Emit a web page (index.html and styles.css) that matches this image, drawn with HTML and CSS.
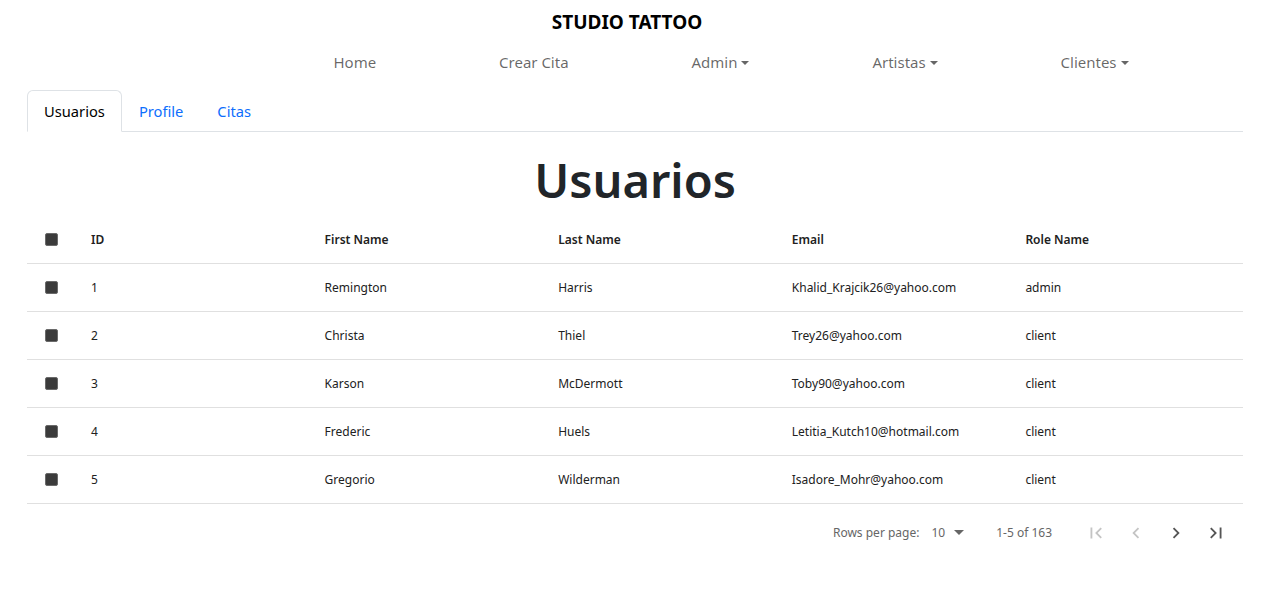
FILE: index.html
```html
<!DOCTYPE html>
<html lang="es">
<head>
<meta charset="utf-8">
<title>Studio Tattoo</title>
<link rel="stylesheet" href="styles.css">
</head>
<body>
<header class="navbar">
  <div class="brand">STUDIO TATTOO</div>
  <ul class="nav">
    <li><a class="nav-link">Home</a></li>
    <li><a class="nav-link">Crear Cita</a></li>
    <li><a class="nav-link dropdown">Admin</a></li>
    <li><a class="nav-link dropdown">Artistas</a></li>
    <li><a class="nav-link dropdown">Clientes</a></li>
  </ul>
</header>
<main class="container">
  <div class="tabs">
    <a class="tab active">Usuarios</a>
    <a class="tab">Profile</a>
    <a class="tab">Citas</a>
  </div>
  <h1 class="title">Usuarios</h1>
  <table class="grid">
    <thead>
      <tr>
        <th class="check"><span class="box"></span></th>
        <th>ID</th>
        <th>First Name</th>
        <th>Last Name</th>
        <th>Email</th>
        <th>Role Name</th>
      </tr>
    </thead>
    <tbody>
      <tr><td class="check"><span class="box"></span></td><td>1</td><td>Remington</td><td>Harris</td><td>Khalid_Krajcik26@yahoo.com</td><td>admin</td></tr>
      <tr><td class="check"><span class="box"></span></td><td>2</td><td>Christa</td><td>Thiel</td><td>Trey26@yahoo.com</td><td>client</td></tr>
      <tr><td class="check"><span class="box"></span></td><td>3</td><td>Karson</td><td>McDermott</td><td>Toby90@yahoo.com</td><td>client</td></tr>
      <tr><td class="check"><span class="box"></span></td><td>4</td><td>Frederic</td><td>Huels</td><td>Letitia_Kutch10@hotmail.com</td><td>client</td></tr>
      <tr><td class="check"><span class="box"></span></td><td>5</td><td>Gregorio</td><td>Wilderman</td><td>Isadore_Mohr@yahoo.com</td><td>client</td></tr>
    </tbody>
  </table>
  <div class="pagination">
    <span class="rpp-label">Rows per page:</span>
    <span class="rpp-select">10 <svg class="caret" viewBox="0 0 10 5" width="10" height="5"><path d="M0 0 L10 0 L5 5 Z" fill="#666"/></svg></span>
    <span class="range">1-5 of 163</span>
    <div class="pager">
      <span class="pbtn disabled"><svg viewBox="0 0 24 24" width="22" height="22"><path d="M18.41 16.59 13.82 12l4.59-4.59L17 6l-6 6 6 6zM6 6h2v12H6z" fill="currentColor"/></svg></span>
      <span class="pbtn disabled"><svg viewBox="0 0 24 24" width="22" height="22"><path d="M15.41 7.41 14 6l-6 6 6 6 1.41-1.41L10.83 12z" fill="currentColor"/></svg></span>
      <span class="pbtn"><svg viewBox="0 0 24 24" width="22" height="22"><path d="M10 6 8.59 7.41 13.17 12l-4.58 4.59L10 18l6-6z" fill="currentColor"/></svg></span>
      <span class="pbtn"><svg viewBox="0 0 24 24" width="22" height="22"><path d="M5.59 7.41 10.18 12l-4.59 4.59L7 18l6-6-6-6zM16 6h2v12h-2z" fill="currentColor"/></svg></span>
    </div>
  </div>
</main>
</body>
</html>
```
FILE: styles.css
```css
* { box-sizing: border-box; }
body {
  margin: 0;
  font-family: "Noto Sans", "Open Sans", sans-serif;
  color: #212529;
  background: #fff;
}
.navbar {
  display: flex;
  flex-direction: column;
  padding-top: 9px;
}
.brand {
  text-align: center;
  font-size: 19px;
  font-weight: 700;
  color: #000;
  line-height: 26px;
  padding-right: 9px;
}
.nav {
  list-style: none;
  margin: 15px 0 0 272px;
  padding: 0;
  width: 918px;
  display: flex;
}
.nav li {
  flex: 1 1 auto;
  text-align: center;
}
.nav-link {
  display: block;
  padding: 0 16px;
  font-size: 15px;
  line-height: 24px;
  color: rgba(0,0,0,0.6);
}
.dropdown::after {
  content: "";
  display: inline-block;
  margin-left: 4px;
  vertical-align: 3px;
  border-top: 4px solid;
  border-left: 4px solid transparent;
  border-right: 4px solid transparent;
}
.container {
  margin: 0 20px 0 27px;
  padding-top: 16px;
}
.tabs {
  display: flex;
  border-bottom: 1px solid #dee2e6;
}
.tab {
  display: block;
  padding: 8px 16px;
  font-size: 14.7px;
  line-height: 24px;
  color: #0d6efd;
  border: 1px solid transparent;
  border-top-left-radius: 6px;
  border-top-right-radius: 6px;
  margin-bottom: -1px;
}
.tab.active {
  color: #000;
  border-color: #dee2e6 #dee2e6 #fff;
  background: #fff;
}
.title {
  margin: 18px 0 6px;
  text-align: center;
  font-size: 47px;
  font-weight: 600;
  line-height: 60px;
  color: #212529;
}
.grid {
  width: 100%;
  border-collapse: collapse;
  table-layout: fixed;
  font-size: 12px;
  color: #212121;
}
.grid th, .grid td {
  text-align: left;
  padding: 0 16px;
  border-bottom: 1px solid #e0e0e0;
  white-space: nowrap;
}
.grid th {
  height: 47px;
  font-weight: 600;
}
.grid td {
  height: 48px;
}
.grid .check {
  width: 48px;
  padding: 0 0 0 18px;
}
.box {
  display: block;
  width: 13px;
  height: 13px;
  background: #3b3b3b;
  border: 1px solid #6a6a6a;
  border-radius: 2px;
}
.pagination {
  display: flex;
  align-items: center;
  justify-content: flex-end;
  height: 58px;
  font-size: 12px;
  color: #666;
  padding-right: 16px;
}
.rpp-select {
  margin-left: 12px;
  display: inline-flex;
  align-items: center;
  gap: 9px;
}
.range {
  margin-left: 32px;
}
.pager {
  display: flex;
  margin-left: 33px;
  gap: 18px;
}
.pbtn {
  display: flex;
  width: 22px;
  height: 22px;
  color: #555;
}
.pbtn.disabled {
  color: #c4c4c4;
}
```
